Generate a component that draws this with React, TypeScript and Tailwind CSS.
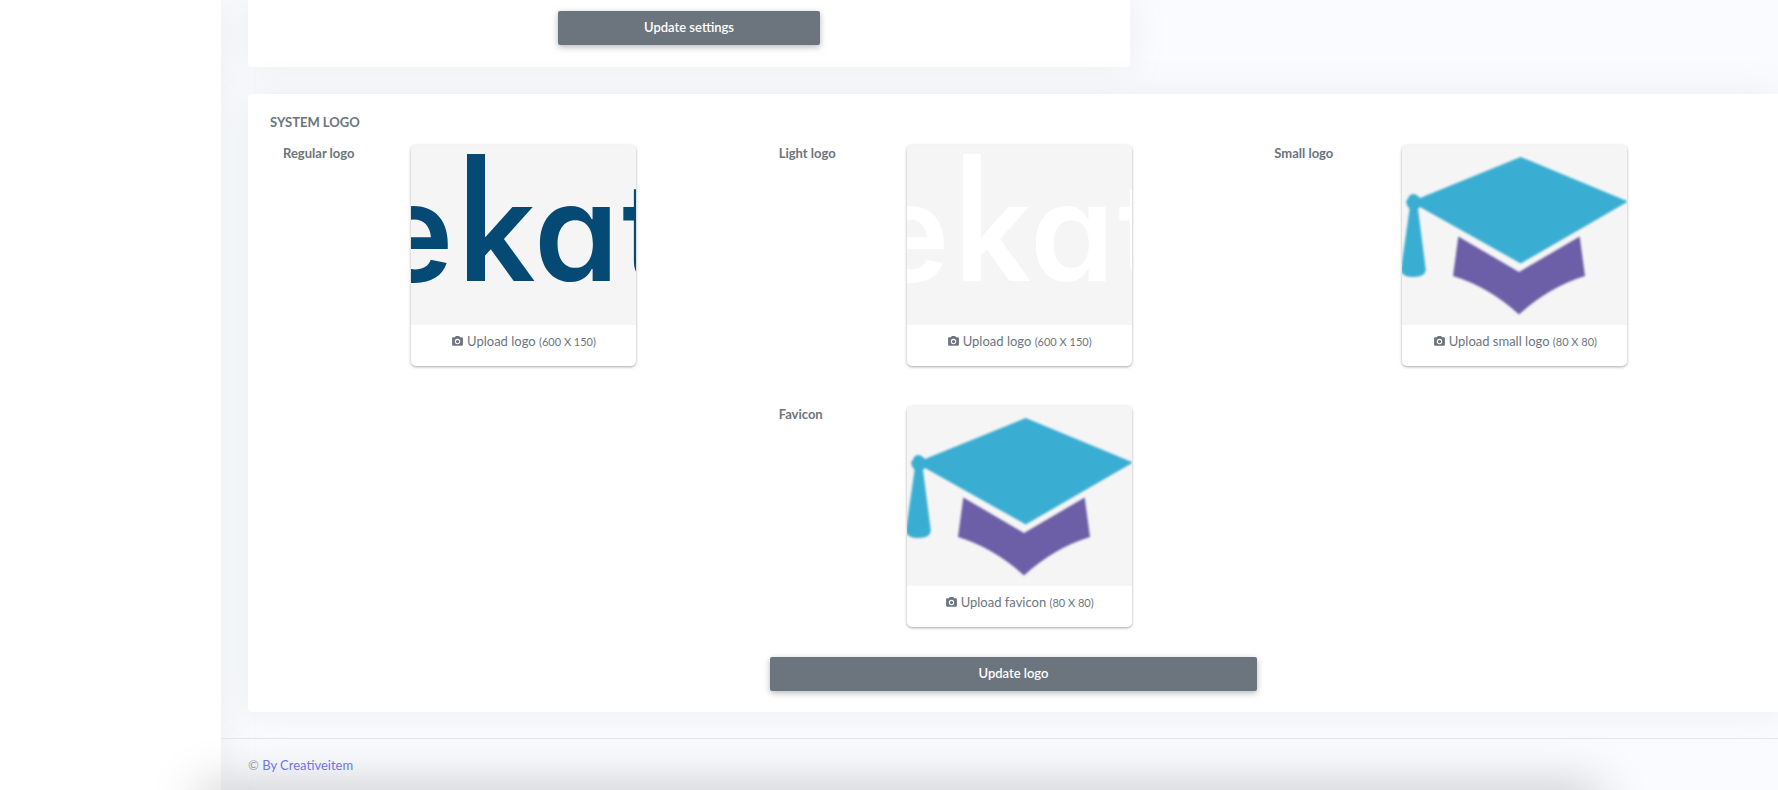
import React from "react";

function CameraIcon() {
  return (
    <svg viewBox="0 0 24 24" className="size-[13px] shrink-0 fill-current" aria-hidden="true">
      <path d="M4,4H7L9,2H15L17,4H20A2,2 0 0,1 22,6V18A2,2 0 0,1 20,20H4A2,2 0 0,1 2,18V6A2,2 0 0,1 4,4M12,7A5,5 0 0,0 7,12A5,5 0 0,0 12,17A5,5 0 0,0 17,12A5,5 0 0,0 12,7M12,9A3,3 0 0,1 15,12A3,3 0 0,1 12,15A3,3 0 0,1 9,12A3,3 0 0,1 12,9Z" />
    </svg>
  );
}

function Wordmark({ className }: { className: string }) {
  return (
    <svg viewBox="0 0 225 180" className={`block w-full ${className}`}>
      <g
        fill="currentColor"
        className="font-['Inter',sans-serif] text-[136px] font-semibold [font-feature-settings:'cv11'_1]"
      >
        <text x="-38" y="136">e</text>
        <text x="47" y="136">k</text>
        <text x="123" y="136">a</text>
        <text x="211" y="136">t</text>
      </g>
      <rect x="56" y="9" width="18" height="127" fill="currentColor" />
    </svg>
  );
}

function CapLogo() {
  return (
    <svg viewBox="1 0 225 180" className="block w-full" aria-hidden="true">
      <g className="blur-[1px]">
        <path
          fill="#3aaed2"
          d="M119.7 12 L227 56.5 L119.7 118.5 L19 62 L17 64 L24.7 124 Q25 132 12.5 132 Q0 132 0 124 L8.6 64 Q5 60 5 56 Q7 55 8 51 Q10 49 12.5 49 Q15 49 19 53 Z"
        />
        <path
          fill="#6c5fa7"
          d="M57.3 91.5 L118 127 L178.7 91.5 L184 131 Q148 142 118 169.5 Q88 142 52 131 Z"
        />
      </g>
    </svg>
  );
}

type UploadProps = {
  id: string;
  title: string;
  action: string;
  size: string;
  className?: string;
  children: React.ReactNode;
};

function UploadField({ id, title, action, size, className = "", children }: UploadProps) {
  return (
    <div className={`flex items-start pl-[13px] ${className}`}>
      <label htmlFor={id} className="w-32 shrink-0 text-[13px] leading-4 font-bold">
        {title}
      </label>
      <div className="relative w-[225px] overflow-hidden rounded-[5px] bg-white shadow-[0_1px_3px_rgba(0,0,0,0.35)]">
        <div className="bg-[#f5f5f5]">{children}</div>
        <label
          htmlFor={id}
          className="flex h-[41px] cursor-pointer items-center justify-center gap-[3px] pb-2 text-[13px]"
        >
          <CameraIcon />
          <span>
            {action} <small className="text-[11px]">{size}</small>
          </span>
        </label>
        <input id={id} type="file" accept="image/*" className="sr-only" />
      </div>
    </div>
  );
}

const buttonClass =
  "h-[34px] cursor-pointer rounded-[2px] bg-[#6c757d] text-[13px] font-semibold text-white shadow-[0_2px_6px_rgba(108,117,125,0.5)]";
const cardClass = "bg-white shadow-[0_0_35px_rgba(154,161,171,0.15)]";

export default function App() {
  return (
    <div className="relative flex h-screen overflow-hidden bg-[#fafbfe] font-['Lato',sans-serif] text-[13px] text-[#6c757d]">
      <aside className="w-[221px] shrink-0 bg-white shadow-[0_0_35px_rgba(154,161,171,0.15)]" />
      <div className="flex min-w-0 flex-1 flex-col">
        <main className="pl-[27px]">
          <section className={`flex w-[57.65%] justify-center rounded-b-[4px] pt-[11px] pb-[22px] ${cardClass}`}>
            <button type="button" className={`w-[262px] ${buttonClass}`}>
              Update settings
            </button>
          </section>
          <section className={`mt-[27px] rounded-l-[4px] pt-[18px] pr-[21px] pb-[21px] pl-[22px] ${cardClass}`}>
            <h4 className="text-[13px] leading-5 font-bold uppercase">System logo</h4>
            <form>
              <div className="mt-[13px] grid grid-cols-3 gap-y-10">
                <UploadField id="regular" title="Regular logo" action="Upload logo" size="(600 X 150)">
                  <Wordmark className="text-[#044a75]" />
                </UploadField>
                <UploadField id="light" title="Light logo" action="Upload logo" size="(600 X 150)">
                  <Wordmark className="text-white" />
                </UploadField>
                <UploadField id="small" title="Small logo" action="Upload small logo" size="(80 X 80)">
                  <CapLogo />
                </UploadField>
                <UploadField
                  id="favicon"
                  title="Favicon"
                  action="Upload favicon"
                  size="(80 X 80)"
                  className="col-start-2"
                >
                  <CapLogo />
                </UploadField>
              </div>
              <div className="mt-[30px] grid grid-cols-3">
                <button type="button" className={`col-start-2 mx-1 ${buttonClass}`}>
                  Update logo
                </button>
              </div>
            </form>
          </section>
        </main>
        <footer className="mt-[26px] border-t border-[#e2e7eb] pt-4 pl-[27px] text-[13px] leading-5 text-[#98a6ad]">
          ©{" "}
          <a href="#" className="text-[#727cf5]">
            By Creativeitem
          </a>
        </footer>
      </div>
      <div className="pointer-events-none absolute right-[178px] -bottom-10 left-[200px] h-10 shadow-[0_-3px_50px_rgba(0,0,0,0.22)]" />
    </div>
  );
}
